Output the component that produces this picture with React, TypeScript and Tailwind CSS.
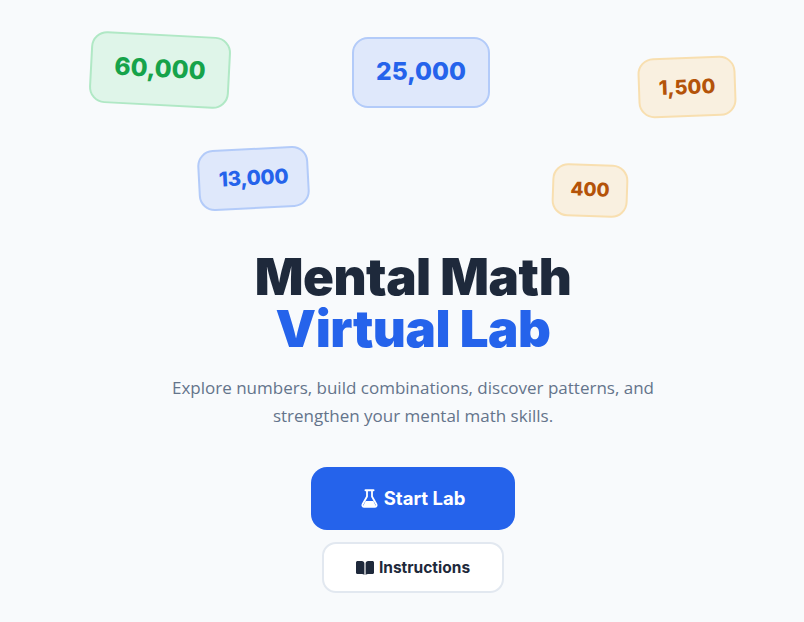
const cards = [
  { label: '60,000', cls: 'left-[90px] top-[34px] w-[140px] h-[72px] pb-[3px] rotate-[3deg] text-[24.5px] bg-[#dff5e9] border-[#b0e8c5] text-[#16a34a]' },
  { label: '25,000', cls: 'left-[352px] top-[37px] w-[138px] h-[71px] pb-[3px] text-[24.5px] bg-[#dfe8fb] border-[#b3cbf9] text-[#2563eb]' },
  { label: '1,500', cls: 'left-[638px] top-[57px] w-[98px] h-[60px] pb-[1px] -rotate-[2deg] text-[20px] bg-[#f9f0e0] border-[#f8dfb0] text-[#b45309]' },
  { label: '13,000', cls: 'left-[198px] top-[148px] w-[111px] h-[61px] -rotate-[3deg] text-[20.5px] tracking-[-0.3px] bg-[#dfe8fb] border-[#b3cbf9] text-[#2563eb]' },
  { label: '400', cls: 'left-[552px] top-[164px] w-[76px] h-[53px] rotate-[2deg] text-[19px] bg-[#f9f0e0] border-[#f8dfb0] text-[#b45309]' },
];

function FlaskIcon() {
  return (
    <svg width="17" height="19" viewBox="0 0 17 19" fill="none" className="shrink-0">
      <path d="M4.5 1.2h8" stroke="white" strokeWidth="2" strokeLinecap="round" />
      <path d="M6 1.5v6L1.6 15.2c-.7 1.3.1 2.6 1.6 2.6h10.6c1.5 0 2.3-1.3 1.6-2.6L11 7.5v-6" stroke="white" strokeWidth="1.8" strokeLinejoin="round" />
      <path d="M4.6 12h7.8l2.2 4.4c.2.5-.1.9-.6.9H3c-.5 0-.8-.4-.6-.9z" fill="white" />
    </svg>
  );
}

function BookIcon() {
  return (
    <svg width="18" height="14" viewBox="0 0 18 14" fill="#1e293b" className="shrink-0">
      <path d="M0 1.6C0 .7.7 0 1.6 0h4.2C7.3 0 8.4 1 8.4 2.4V14c-.6-.7-1.5-1-2.4-1H1.2C.5 13 0 12.500 0 11.800z" />
      <path d="M18 1.600C18 .7 17.300 0 16.400 0h-4.200C10.700 0 9.600 1 9.600 2.400V14c.6-.7 1.500-1 2.400-1h4.800c.7 0 1.200-.5 1.200-1.200z" />
    </svg>
  );
}

export default function App() {
  return (
    <div className="relative min-h-screen overflow-hidden bg-[#f8fafc] font-['Inter',sans-serif]">
      {/* Floating numbers */}
      {cards.map((c) => (
        <div
          key={c.label}
          className={`absolute flex items-center justify-center rounded-2xl border-2 font-extrabold ${c.cls}`}
        >
          {c.label}
        </div>
      ))}

      <div className="flex w-[826px] flex-col items-center pt-[251px]">
        <h1 className="text-center text-[51px] leading-[52px] font-black tracking-[-0.5px] text-[#1e293b]">
          Mental Math
          <br />
          <span className="text-[#2563eb]">Virtual Lab</span>
        </h1>

        <p className="mt-[19px] w-[520px] text-center font-['Open_Sans',sans-serif] text-[17px] leading-[28px] text-[#64748b]">
          Explore numbers, build combinations, discover patterns, and strengthen your mental math skills.
        </p>

        <button className="mt-[37px] flex h-[63px] w-[204px] items-center justify-center gap-[6px] rounded-2xl bg-[#2563eb] text-[18.5px] font-bold text-white">
          <FlaskIcon />
          Start Lab
        </button>

        <button className="mt-[12px] flex h-[51px] w-[182px] items-center justify-center gap-[5px] rounded-[14px] border-2 border-[#e2e8f0] bg-white text-[15.5px] font-bold text-[#1e293b]">
          <BookIcon />
          Instructions
        </button>
      </div>
    </div>
  );
}
